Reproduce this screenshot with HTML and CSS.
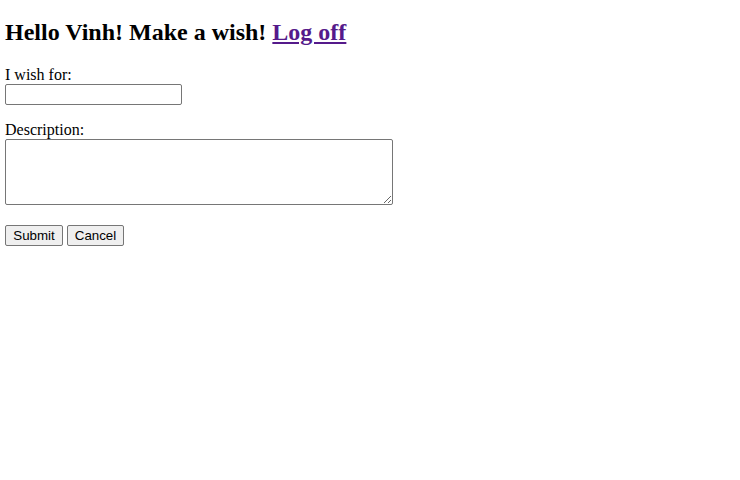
FILE: index.html
```html
<!DOCTYPE html>
<html>
<head>
<meta charset="utf-8">
<title>Make a wish</title>
<link rel="stylesheet" href="styles.css">
</head>
<body>
<h2 class="title">Hello Vinh! Make a wish! <a href="#" class="logoff">Log off</a></h2>
<form class="wish-form">
<div class="field">
<label class="label" for="wish">I wish for:</label>
<input class="text-input" id="wish" type="text">
</div>
<div class="field">
<label class="label" for="desc">Description:</label>
<textarea class="text-area" id="desc"></textarea>
</div>
<div class="actions">
<button type="button" class="btn btn-submit">Submit</button>
<button type="button" class="btn btn-cancel">Cancel</button>
</div>
</form>
</body>
</html>
```
FILE: styles.css
```css
html, body {
  background: #fff;
}
body {
  margin: 5px;
  font-family: "Liberation Serif", "Times New Roman", serif;
  font-size: 16px;
  color: #000;
}
.title {
  font-size: 24px;
  font-weight: bold;
  margin: 13px 0 20px;
  line-height: 28px;
}
.logoff {
  color: #551a8b;
  text-decoration: underline;
}
.field {
  display: flex;
  flex-direction: column;
  align-items: flex-start;
  margin-bottom: 16px;
}
.label {
  line-height: 18px;
}
.text-input {
  box-sizing: border-box;
  width: 177px;
  height: 21px;
  margin: 0;
  border: 1px solid #767676;
  border-radius: 2px;
  padding: 1px 2px;
  font-family: "Liberation Sans", Arial, sans-serif;
  font-size: 13.33px;
}
.text-area {
  box-sizing: border-box;
  width: 388px;
  height: 66px;
  margin: 0;
  border: 1px solid #767676;
  border-radius: 2px;
  padding: 2px;
  font-family: "Liberation Mono", monospace;
  font-size: 13.33px;
}
.actions {
  display: flex;
  gap: 4px;
  margin-top: 20px;
}
.btn {
  box-sizing: border-box;
  height: 21px;
  margin: 0;
  padding: 1px 0;
  border: 1px solid #767676;
  border-radius: 2px;
  background: #efefef;
  color: #000;
  font-family: "Liberation Sans", Arial, sans-serif;
  font-size: 13.33px;
  text-align: center;
}
.btn-submit { width: 58px; }
.btn-cancel { width: 57px; }
```
